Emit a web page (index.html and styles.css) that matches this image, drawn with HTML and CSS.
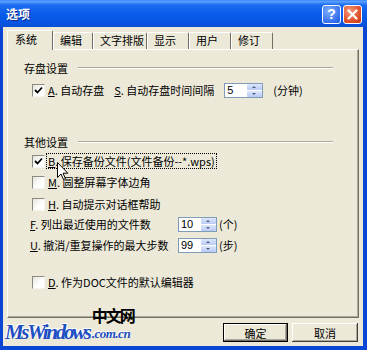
FILE: index.html
```html
<!DOCTYPE html>
<html lang="zh-CN">
<head>
<meta charset="utf-8">
<title>选项</title>
<link rel="stylesheet" href="styles.css">
</head>
<body>
<div class="window">
  <div class="titlebar">
    <span class="title">选项</span>
    <div class="tb-btns">
      <span class="tb-btn help">?</span>
      <span class="tb-btn close"><svg width="11" height="11" viewBox="0 0 11 11"><path d="M1.5 1.5 L9.5 9.5 M9.5 1.5 L1.5 9.5" stroke="#fff" stroke-width="2.2" stroke-linecap="round"/></svg></span>
    </div>
  </div>
  <div class="frame">
    <div class="client">
      <div class="tabs">
        <div class="tab active t1">系统</div>
        <div class="tab t2">编辑</div>
        <div class="tab t3">文字排版</div>
        <div class="tab t4">显示</div>
        <div class="tab t5">用户</div>
        <div class="tab t6">修订</div>
      </div>
      <div class="panel">
        <div class="group g1"><span>存盘设置</span><i class="rule"></i></div>
        <div class="row ra">
          <span class="cb"><svg width="9" height="9" viewBox="0 0 9 9"><path d="M1 4 L3.5 6.5 L8 1.5" fill="none" stroke="#000" stroke-width="1.8"/></svg></span>
          <span class="lbl"><u>A</u>. 自动存盘</span>
          <span class="lbl ls"><u>S</u>. 自动存盘时间间隔</span>
          <span class="spin sp-a"><span class="spin-val">5</span><span class="spin-btns"><i class="up"></i><i class="down"></i></span></span>
          <span class="unit ua">(分钟)</span>
        </div>
        <div class="group g2"><span>其他设置</span><i class="rule"></i></div>
        <div class="row rb">
          <span class="cb"><svg width="9" height="9" viewBox="0 0 9 9"><path d="M1 4 L3.5 6.5 L8 1.5" fill="none" stroke="#000" stroke-width="1.8"/></svg></span>
          <span class="lbl focus"><u>B</u>. 保存备份文件(文件备份--*.wps)</span>
        </div>
        <div class="row rm">
          <span class="cb"></span>
          <span class="lbl"><u>M</u>. 圆整屏幕字体边角</span>
        </div>
        <div class="row rh">
          <span class="cb"></span>
          <span class="lbl"><u>H</u>. 自动提示对话框帮助</span>
        </div>
        <div class="row num rf">
          <span class="nlbl"><u>F</u>. 列出最近使用的文件数</span>
          <span class="spin sp-n"><span class="spin-val">10</span><span class="spin-btns"><i class="up"></i><i class="down"></i></span></span>
          <span class="unit">(个)</span>
        </div>
        <div class="row num ru">
          <span class="nlbl"><u>U</u>. 撤消/重复操作的最大步数</span>
          <span class="spin sp-n"><span class="spin-val">99</span><span class="spin-btns"><i class="up"></i><i class="down"></i></span></span>
          <span class="unit">(步)</span>
        </div>
        <div class="row rd">
          <span class="cb"></span>
          <span class="lbl"><u>D</u>. 作为DOC文件的默认编辑器</span>
        </div>
      </div>
      <div class="buttons">
        <span class="btn default">确定</span>
        <span class="btn">取消</span>
      </div>
    </div>
  </div>
  <svg class="cursor" width="12" height="19" viewBox="0 0 12 19"><path d="M0.5 0.5 L0.5 15.5 L4 12 L6.5 17.5 L8.5 16.6 L6 11.2 L10.8 11.2 Z" fill="#fff" stroke="#000" stroke-width="1"/></svg>
  <div class="watermark">
    <span class="wm-main">MsWindows</span>
    <span class="wm-side"><span class="wm-cn">中文网</span><span class="wm-com">.com.cn</span></span>
  </div>
</div>
</body>
</html>
```
FILE: styles.css
```css
html, body { margin: 0; padding: 0; }
body {
  width: 367px; height: 350px; overflow: hidden;
  font-family: "Noto Sans CJK SC", "Liberation Sans", sans-serif;
  font-size: 11px; color: #000;
}
.window {
  position: relative;
  width: 367px; height: 350px;
  display: flex; flex-direction: column;
  background: #0A46D4;
}
.titlebar {
  height: 27px; flex: none;
  display: flex; align-items: center; justify-content: space-between;
  padding: 0 5px 0 6px;
  background: linear-gradient(#3A86FA 0%, #5AA0FF 6%, #1B6CF2 18%, #0A5DEA 50%, #0756E4 80%, #0A4ED6 100%);
}
.title {
  color: #fff; font-weight: bold; font-size: 12px;
  text-shadow: 1px 1px 0 #0A2A8C;
}
.tb-btns { display: flex; gap: 2px; margin-top: 1px; }
.tb-btn {
  width: 19px; height: 19px; box-sizing: border-box;
  border: 1px solid #fff; border-radius: 3px;
  display: flex; align-items: center; justify-content: center;
  color: #fff; font: bold 14px "Liberation Sans", sans-serif;
}
.help { background: radial-gradient(circle at 35% 30%, #7FB0FF, #3570EC 70%, #1F56D6); }
.close { background: radial-gradient(circle at 35% 30%, #F49A7A, #E0522C 60%, #C43A16); }
.frame {
  flex: 1; display: flex;
  padding: 0 4px 4px 3px;
}
.client {
  flex: 1; display: flex; flex-direction: column;
  background: #ECE9D8;
  padding: 3px 4px 4px 4px;
}
.tabs { display: flex; align-items: flex-end; height: 19px; flex: none; }
.tab {
  height: 17px; box-sizing: border-box;
  padding-left: 6px; line-height: 15px;
  border-top: 1px solid #fff; border-left: 1px solid #fff;
  border-right: 1px solid #716F64;
  border-radius: 2px 2px 0 0;
  background: #ECE9D8;
}
.tab.active {
  height: 20px; margin-bottom: -1px; position: relative; z-index: 1;
  padding-left: 7px; line-height: 17px;
}
.t1 { width: 46px; }
.t2 { width: 40px; }
.t3 { width: 54px; }
.t4 { width: 42px; }
.t5 { width: 42px; }
.t6 { width: 42px; }
.panel {
  height: 269px; box-sizing: border-box; flex: none;
  border: 1px solid; border-color: #fff #716F64 #716F64 #fff;
  box-shadow: inset -1px -1px 0 #ACA899;
  display: flex; flex-direction: column;
}
.group {
  height: 14px; display: flex; align-items: center;
  margin-left: 16px; margin-right: 25px;
}
.group .rule {
  flex: 1; height: 0; margin-left: 10px;
  border-top: 1px solid #ACA899; border-bottom: 1px solid #fff;
}
.g1 { margin-top: 11px; }
.g2 { margin-top: 37px; }
.row { height: 16px; display: flex; align-items: center; padding-left: 24px; line-height: 16px; white-space: nowrap; }
.ra { margin-top: 7px; }
.rb { margin-top: 4px; }
.rm { margin-top: 5px; }
.rh { margin-top: 6px; }
.rf { margin-top: 4px; }
.ru { margin-top: 5px; }
.rd { margin-top: 21px; }
.row.num { padding-left: 22px; }
.cb {
  width: 13px; height: 13px; box-sizing: border-box; flex: none;
  border: 1px solid; border-color: #8C8A80 #F4F3EE #F4F3EE #8C8A80;
  background: linear-gradient(135deg, #E6E4DC, #FFFFFF 60%);
  display: flex; align-items: center; justify-content: center;
  margin-right: 3px;
}
.lbl u, .nlbl u { text-decoration: underline; }
.ls { margin-left: 10px; }
.focus { outline: 1px dotted #000; outline-offset: 0; padding: 0 1px; margin-left: -1px; line-height: 14px; }
.nlbl { width: 148px; flex: none; }
.spin {
  height: 15px; box-sizing: border-box; display: flex;
  border: 1px solid #7F9DB9; background: #fff;
}
.sp-a { width: 39px; margin-left: 10px; }
.sp-n { width: 39px; }
.spin-val { flex: 1; padding-left: 2px; font: 11px "Liberation Sans", sans-serif; line-height: 13px; }
.spin-btns { width: 15px; display: flex; flex-direction: column; gap: 1px; padding: 0 0 0 1px; }
.spin-btns i {
  flex: 1; position: relative; border-radius: 1px;
  background: linear-gradient(#DDE6FB, #B9CAF3);
}
.spin-btns i::after {
  content: ""; position: absolute; left: 5px; top: 2px;
  border-left: 2px solid transparent; border-right: 2px solid transparent;
}
.spin-btns .up::after { border-bottom: 2px solid #4D6185; }
.spin-btns .down::after { border-top: 2px solid #4D6185; }
.unit { margin-left: 2px; }
.ua { margin-left: 10px; }
.buttons {
  display: flex; justify-content: flex-end; gap: 4px;
  margin-top: 5px; padding-right: 1px;
}
.btn {
  height: 19px; box-sizing: border-box;
  display: flex; align-items: center; justify-content: center;
  background: #ECE9D8;
  box-shadow: inset -1px -1px 0 #404040, inset 1px 1px 0 #fff, inset -2px -2px 0 #ACA899;
  width: 66px;
}
.btn.default {
  width: 65px; border: 1px solid #000;
  box-shadow: inset -1px -1px 0 #716F64, inset 1px 1px 0 #fff, inset -2px -2px 0 #ACA899;
}
.cursor { position: absolute; left: 57px; top: 162px; }
.watermark {
  position: absolute; left: 5px; top: 305px;
  display: flex; align-items: flex-end;
}
.wm-main {
  font: italic bold 21px "Liberation Serif", serif;
  letter-spacing: -2.3px; color: #1D4EC2;
  line-height: 17px;
  text-shadow: -1px -1px 0 #fff, 1px -1px 0 #fff;
}
.wm-side { display: flex; flex-direction: column; align-items: flex-start; margin-left: 2px; }
.wm-cn { font: bold 16px "Noto Sans CJK SC", sans-serif; letter-spacing: -2px; line-height: 21px; color: #000; }
.wm-com { font: italic bold 13px "Liberation Serif", serif; color: #1D4EC2; line-height: 15px; letter-spacing: -0.5px; text-shadow: -1px -1px 0 #fff; }
```
